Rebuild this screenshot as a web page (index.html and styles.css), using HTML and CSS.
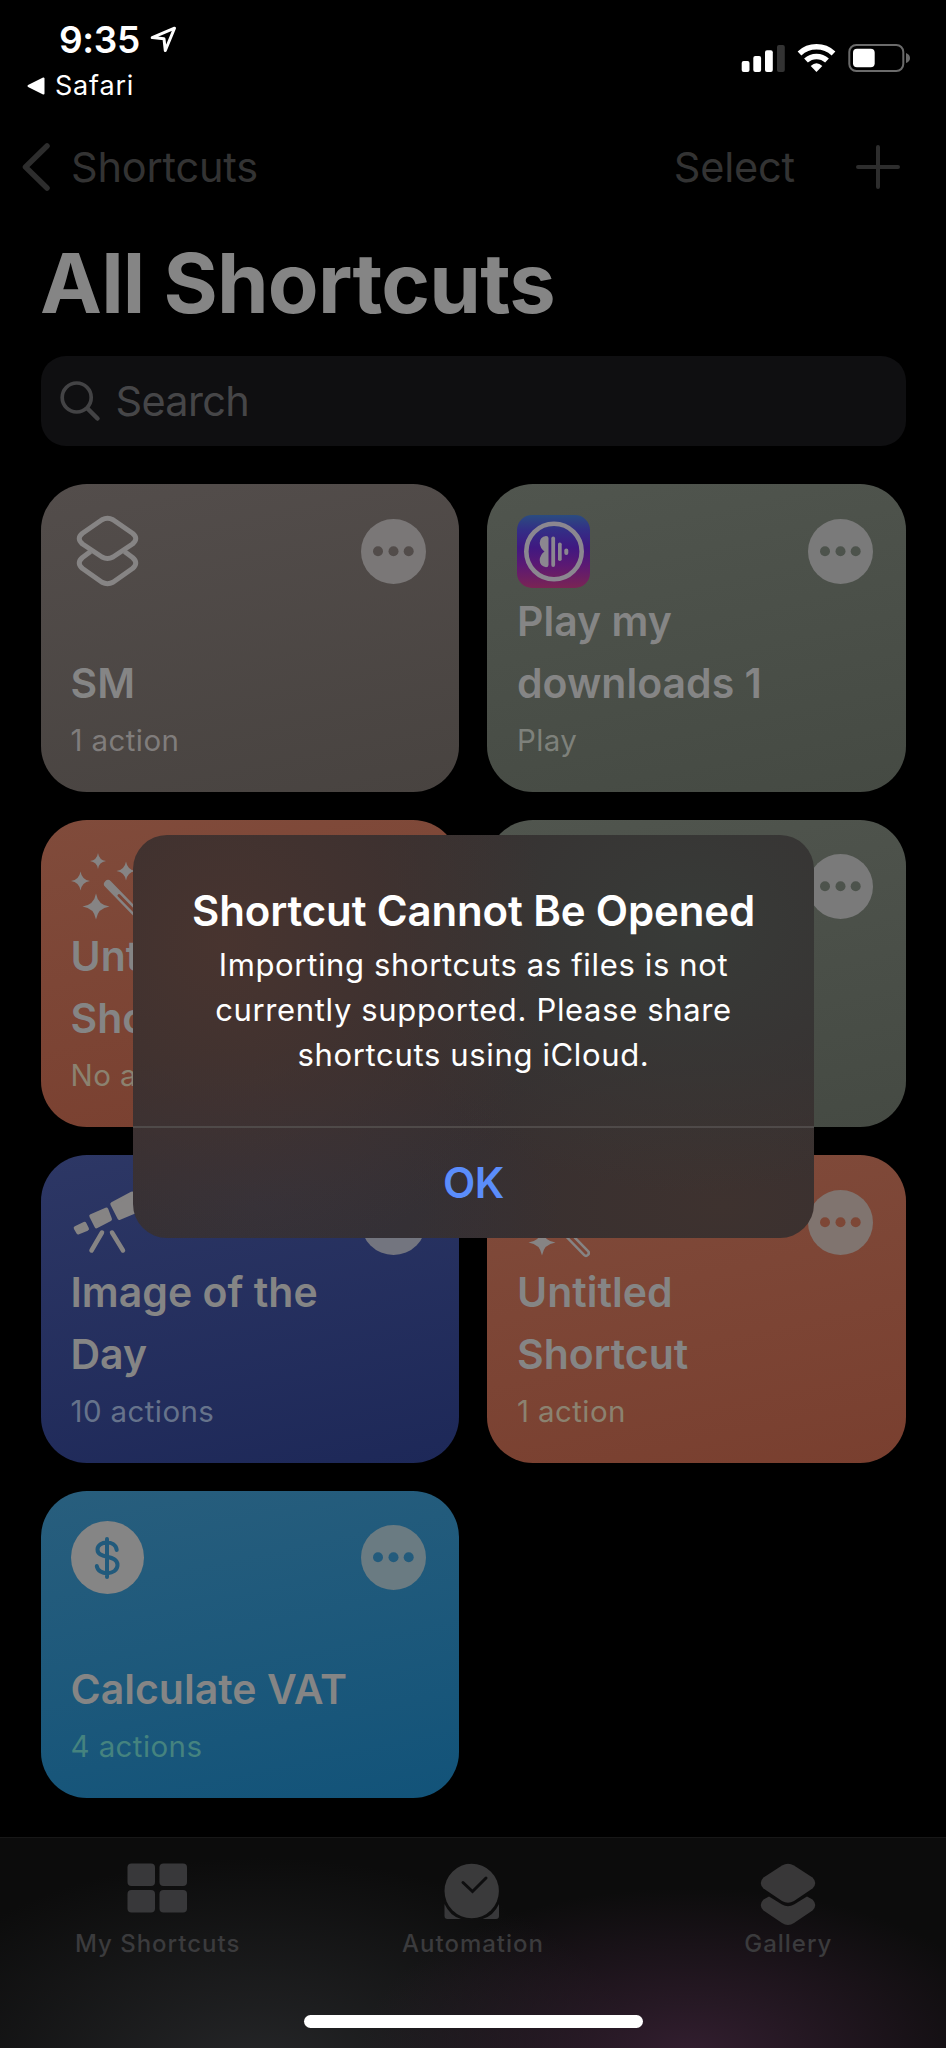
FILE: index.html
```html
<!DOCTYPE html>
<html lang="en">
<head>
    <meta charset="UTF-8">
    <title>All Shortcuts</title>
    <link rel="stylesheet" href="styles.css">
</head>
<body>
    <!-- shared shapes -->
    <svg class="defs" width="0" height="0">
        <symbol id="wand" viewBox="0 0 73 73">
            <path d="M27 3 Q28 10 35 11 Q28 12 27 19 Q26 12 19 11 Q26 10 27 3Z"/>
            <path d="M9.500 21.500 Q10.800 29.700 19 31 Q10.800 32.300 9.500 40.500 Q8.200 32.300 0 31 Q8.200 29.700 9.500 21.500Z"/>
            <path d="M55 11.500 Q56.300 19.700 64.500 21 Q56.300 22.300 55 30.500 Q53.700 22.300 45.500 21 Q53.700 19.700 55 11.500Z"/>
            <path d="M25 43.500 Q27 55 38.500 56.500 Q27 58 25 69.500 Q23 58 11.500 56.500 Q23 55 25 43.500Z"/>
            <path class="wand-body" d="M37 34 L69 67"/>
            <path class="wand-slot" d="M48 45.500 L69 67"/>
        </symbol>
        <symbol id="dots" viewBox="0 0 65 65">
            <circle cx="32.500" cy="32.500" r="32.500" fill="currentColor"/>
            <g>
                <circle cx="17" cy="32.300" r="5"/>
                <circle cx="32.500" cy="32.300" r="5"/>
                <circle cx="47.700" cy="32.300" r="5"/>
            </g>
        </symbol>
    </svg>

    <div class="phone">
        <header class="status">
            <div class="status-left">
                <div class="time">
                    <span>9:35</span>
                    <svg width="27" height="27" viewBox="0 0 27 27"><path d="M2.200 11.600 L24.500 2.200 L15.300 24.500 L14 12.800Z" fill="none" stroke="#fff" stroke-width="3" stroke-linejoin="round"/></svg>
                </div>
                <div class="back-app">
                    <svg width="18" height="18" viewBox="0 0 18 18"><path d="M1.500 9 L16.500 1.500 V16.500Z" fill="#fff" stroke="#fff" stroke-width="2" stroke-linejoin="round"/></svg>
                    <span>Safari</span>
                </div>
            </div>
            <svg class="indicators" width="170" height="30" viewBox="741 43 170 30">
                <g fill="#fff">
                    <rect x="741.700" y="61" width="7.800" height="11" rx="2"/>
                    <rect x="753.300" y="56" width="7.800" height="16" rx="2"/>
                    <rect x="765" y="50.300" width="7.800" height="21.700" rx="2"/>
                    <rect x="777" y="45" width="7.800" height="27" rx="2" fill="#333"/>
                </g>
                <g fill="none" stroke="#fff" stroke-width="5.500">
                    <path d="M799.500 53.500 A25 25 0 0 1 833.500 53.500"/>
                    <path d="M806 60.500 A15.500 15.500 0 0 1 827 60.500"/>
                </g>
                <path d="M816.500 72 L810.700 66 Q816.500 60.500 822.300 66Z" fill="#fff"/>
                <rect x="849.300" y="45" width="54" height="26" rx="7" fill="none" stroke="#6b6b6b" stroke-width="2"/>
                <path d="M906 53 Q910 54.500 910 58 Q910 61.500 906 63Z" fill="#6b6b6b"/>
                <rect x="853" y="48.700" width="21.700" height="18.600" rx="4" fill="#fff"/>
            </svg>
        </header>

        <nav class="nav">
            <a class="nav-back">
                <svg width="30" height="50" viewBox="0 0 30 50"><path d="M26 4 L4.500 25 L26 46" fill="none" stroke="#2d2d2d" stroke-width="5.500" stroke-linecap="round" stroke-linejoin="round"/></svg>
                <span class="nav-text">Shortcuts</span>
            </a>
            <div class="nav-actions">
                <span class="nav-text">Select</span>
                <svg width="44" height="44" viewBox="0 0 44 44"><path d="M22 2 V42 M2 22 H42" stroke="#2d2d2d" stroke-width="4" stroke-linecap="round"/></svg>
            </div>
        </nav>

        <h1 class="title">All Shortcuts</h1>

        <div class="search">
            <svg width="42" height="42" viewBox="0 0 42 42"><g fill="none" stroke="#434345" stroke-width="3.700" stroke-linecap="round"><circle cx="17.700" cy="17.500" r="14.500"/><path stroke-width="4.500" d="M28.500 28.500 L38.500 38.500"/></g></svg>
            <span>Search</span>
        </div>

        <main class="grid">
            <article class="card taupe">
                <div class="card-top">
                    <svg class="icon" viewBox="0 0 73 73">
                        <g fill="none" stroke="#868484" stroke-width="5" stroke-linejoin="round">
                            <path d="M31 4.700 Q36.500 1.800 42 4.700 L61.500 18.200 Q68 23.500 61.500 29 L42 42 Q36.500 45 31 42 L11.500 29 Q5 23.500 11.500 18.200Z"/>
                            <path d="M19.500 36.500 L11.500 42.500 Q5 48 11.500 53.500 L31 67.300 Q36.500 70.200 42 67.300 L61.500 53.500 Q68 48 61.500 42.500 L53.500 36.500"/>
                        </g>
                    </svg>
                    <svg class="more" viewBox="0 0 65 65"><use href="#dots"/></svg>
                </div>
                <h2>SM</h2>
                <p>1 action</p>
            </article>

            <article class="card sage">
                <div class="card-top">
                    <svg class="icon" viewBox="0 0 73 73">
                        <defs>
                            <linearGradient id="music" x1="0" y1="0" x2="0" y2="1">
                                <stop offset="0" stop-color="#2b4c80"/>
                                <stop offset=".2" stop-color="#332f86"/>
                                <stop offset=".45" stop-color="#401881"/>
                                <stop offset=".7" stop-color="#5d1972"/>
                                <stop offset="1" stop-color="#7a2454"/>
                            </linearGradient>
                        </defs>
                        <rect width="73" height="73" rx="15" fill="url(#music)"/>
                        <circle cx="37" cy="36.500" r="27.700" fill="none" stroke="#8b8790" stroke-width="4.600"/>
                        <g fill="#8b8790">
                            <path d="M31.500 23 Q31.500 21 29 21 Q22.700 22 22.700 28 Q23 33 27.500 36.500 Q23 40 22.700 45 Q22.700 51 29 52.300 Q31.500 52.300 31.500 50Z"/>
                            <rect x="34.300" y="21.500" width="3.800" height="30.500" rx="1.900"/>
                            <rect x="41" y="27.500" width="3.700" height="18.500" rx="1.800"/>
                            <rect x="47.300" y="33.500" width="4" height="6.400" rx="2"/>
                        </g>
                    </svg>
                    <svg class="more" viewBox="0 0 65 65"><use href="#dots"/></svg>
                </div>
                <h2>Play my<br>downloads 1</h2>
                <p>Play</p>
            </article>

            <article class="card coral">
                <div class="card-top">
                    <svg class="icon"><use href="#wand"/></svg>
                    <svg class="more" viewBox="0 0 65 65"><use href="#dots"/></svg>
                </div>
                <h2>Untitled<br>Shortcut</h2>
                <p>No actions</p>
            </article>

            <article class="card sage">
                <div class="card-top">
                    <span class="icon"></span>
                    <svg class="more" viewBox="0 0 65 65"><use href="#dots"/></svg>
                </div>
            </article>

            <article class="card indigo">
                <div class="card-top">
                    <svg class="icon" viewBox="0 0 73 73">
                        <g stroke="#868484" stroke-width="4" stroke-linejoin="round">
                            <path d="M4.700 42 L13.500 37.800 L16 42.800 L7.300 46.500Z"/>
                            <path d="M20.300 30 L35.300 23.500 L39 33.300 L25.500 40.300Z"/>
                            <path d="M41.300 18 L61 7.500 L70 23 L48.500 32Z"/>
                        </g>
                        <path d="M31 46.500 L20.500 64.500 M41 46.500 L52 64.500" fill="none" stroke="#868484" stroke-width="4.500" stroke-linecap="round"/>
                    </svg>
                    <svg class="more" viewBox="0 0 65 65"><use href="#dots"/></svg>
                </div>
                <h2>Image of the<br>Day</h2>
                <p>10 actions</p>
            </article>

            <article class="card coral">
                <div class="card-top">
                    <svg class="icon"><use href="#wand"/></svg>
                    <svg class="more" viewBox="0 0 65 65"><use href="#dots"/></svg>
                </div>
                <h2>Untitled<br>Shortcut</h2>
                <p>1 action</p>
            </article>

            <article class="card blue">
                <div class="card-top">
                    <div class="icon coin">
                        <svg width="26" height="44" viewBox="0 0 26 44" fill="none" stroke="#215a7c" stroke-width="4" stroke-linecap="round"><path d="M13 3 V41 M22.700 14 C21.500 3.500 3.500 4.500 3.500 13.500 C3.500 23.500 23.500 18 23.500 29 C23.500 39.500 4 40 2.800 30"/></svg>
                    </div>
                    <svg class="more" viewBox="0 0 65 65"><use href="#dots"/></svg>
                </div>
                <h2>Calculate VAT</h2>
                <p>4 actions</p>
            </article>
        </main>

        <footer class="tabs">
            <div class="tab">
                <svg width="62" height="64" viewBox="0 0 62 64" fill="#38383a">
                    <rect x="1.500" y="1.500" width="27.500" height="22.500" rx="4"/><rect x="33.500" y="1.500" width="27.500" height="22.500" rx="4"/>
                    <rect x="1.500" y="28" width="27.500" height="22.500" rx="4"/><rect x="33.500" y="28" width="27.500" height="22.500" rx="4"/>
                </svg>
                <span>My Shortcuts</span>
            </div>
            <div class="tab">
                <svg width="62" height="64" viewBox="0 0 62 64">
                    <path d="M3.500 42 Q9 54 20 57 H6.500 Q3.500 57 3.500 54Z M58 42 Q52.500 54 41.500 57 H55 Q58 57 58 54Z" fill="#38383a"/>
                    <circle cx="30.700" cy="29" r="27.200" fill="#3a3a3b"/>
                    <path d="M22 20.500 L31.500 29.500 L45 16" fill="none" stroke="#0e0e0f" stroke-width="3" stroke-linecap="round"/>
                </svg>
                <span>Automation</span>
            </div>
            <div class="tab">
                <svg width="62" height="64" viewBox="0 0 62 64" fill="#383738">
                    <path d="M12 34.500 L6.500 37.500 Q1 43 6.500 48.500 L25 61 Q31 65 37 61 L55.500 48.500 Q61 43 55.500 37.500 L50 34.500 L37 42.500 Q31 46 25 42.500Z"/>
                    <path d="M25 3.500 Q31 0 37 3.500 L55.500 15.500 Q61 21 55.500 26.500 L37 39 Q31 42.500 25 39 L6.500 26.500 Q1 21 6.500 15.500Z"/>
                </svg>
                <span>Gallery</span>
            </div>
        </footer>

        <div class="home-bar"></div>

        <div class="alert">
            <div class="alert-text">
                <h3>Shortcut Cannot Be Opened</h3>
                <p>Importing shortcuts as files is not<br>currently supported. Please share<br>shortcuts using iCloud.</p>
            </div>
            <div class="alert-button">OK</div>
        </div>
    </div>
</body>
</html>
```

FILE: styles.css
```css
* { box-sizing: border-box; }
body { margin: 0; background: #000; font-family: Inter, "Liberation Sans", sans-serif; color: #858585; }
h1, h2, h3, p { margin: 0; }
svg { display: block; flex: none; }
.defs { position: absolute; }

.phone {
    position: relative;
    width: 946px;
    height: 2048px;
    display: flex;
    flex-direction: column;
    overflow: hidden;
    background: #000;
}

/* status bar */
.status { height: 116px; display: flex; justify-content: space-between; padding: 18px 35px 0 27px; color: #fff; }
.time { display: flex; gap: 10px; padding-left: 32px; height: 51px; font-size: 37px; line-height: 44px; font-weight: 600; letter-spacing: -0.3px; }
.time svg { margin-top: 8px; }
.back-app { display: flex; align-items: center; gap: 10px; font-size: 27px; line-height: 34px; letter-spacing: 0.8px; }
.indicators { margin-top: 25px; }

/* navigation */
.nav { height: 101px; display: flex; justify-content: space-between; align-items: center; padding: 0 46px 0 21px; }
.nav-back, .nav-actions { display: flex; align-items: center; }
.nav-back { gap: 20px; }
.nav-actions { gap: 61px; }
.nav-text { font-size: 41.5px; line-height: 50px; color: #333; letter-spacing: -0.2px; }

.title { margin: 21px 0 0 40px; font-size: 83px; line-height: 90px; font-weight: 700; letter-spacing: -0.8px; color: #858585; }

.search {
    margin: 28px 40.5px 0 40.5px;
    height: 90px;
    border-radius: 25px;
    background: #0f0f11;
    display: flex;
    align-items: center;
    gap: 15px;
    padding-left: 18px;
    font-size: 41.5px;
    line-height: 50px;
    letter-spacing: -0.7px;
    color: #464648;
}

/* shortcut cards */
.grid { margin: 38px 40.5px 0 40.5px; display: grid; grid-template-columns: 1fr 1fr; grid-auto-rows: 307.5px; gap: 28px; }
.card { display: flex; flex-direction: column; border-radius: 46px; padding: 30px 33px 32px 30px; white-space: nowrap; }
.card-top { display: flex; justify-content: space-between; align-items: center; height: 74px; margin-bottom: auto; }
.icon { width: 73px; height: 73px; fill: #868484; }
.more { width: 65px; height: 65px; }
.card h2 { font-size: 41px; line-height: 62px; font-weight: 600; letter-spacing: 0; }
.card p { margin-top: 6px; font-size: 29.5px; line-height: 40px; letter-spacing: 0.4px; }
.taupe { background: linear-gradient(168deg, #534d4b, #484340); }
.sage { background: linear-gradient(168deg, #50554e, #454a43); }
.coral { background: linear-gradient(168deg, #804b3b, #793f2f); }
.indigo { background: linear-gradient(168deg, #2d3765, #1d2858); }
.blue { background: linear-gradient(168deg, #285e7d, #125379); }
.taupe .more { color: #7a7777; fill: #524c4a; }
.sage .more { color: #7a7a7a; fill: #4d534c; }
.coral .more { color: #80746f; fill: #7d4736; }
.indigo .more { color: #73757f; fill: #2a3460; }
.blue .more { color: #6a7b82; fill: #235b7c; }
.taupe p { color: #807d7c; }
.sage p { color: #7e817b; }
.coral p { color: #8b8270; }
.indigo p { color: #66738b; }
.blue p { color: #45837f; }
.coin { display: flex; align-items: center; justify-content: center; border-radius: 50%; background: #858585; }
.wand-body { fill: none; stroke: #868484; stroke-width: 8; stroke-linecap: round; }
.wand-slot { fill: none; stroke: #7d4636; stroke-width: 3; stroke-linecap: round; }

/* tab bar */
.tabs {
    margin-top: auto;
    height: 211px;
    border-top: 1px solid #171717;
    display: grid;
    grid-template-columns: repeat(3, 1fr);
    background:
        radial-gradient(ellipse 330px 165px at 690px 215px, #321e2f, rgba(46, 28, 40, 0)),
        radial-gradient(ellipse 380px 210px at 260px 230px, #252628, rgba(34, 35, 37, 0)),
        #0c0c0c;
}
.tab { display: flex; flex-direction: column; align-items: center; padding-top: 24px; gap: 3px; font-size: 24px; line-height: 30px; font-weight: 500; letter-spacing: 1px; color: #3b3b3d; }
.tab svg { margin-left: -1px; }
.home-bar { position: absolute; left: 304px; top: 2015px; width: 339px; height: 13px; border-radius: 7px; background: #fff; }

/* alert over the page */
.alert {
    position: absolute;
    left: 133px;
    top: 835px;
    width: 681px;
    height: 403px;
    border-radius: 34px;
    overflow: hidden;
    display: flex;
    flex-direction: column;
    text-align: center;
    color: #fff;
    background:
        radial-gradient(ellipse 330px 330px at 90px 110px, #48342f, rgba(72, 52, 47, 0)),
        radial-gradient(ellipse 330px 270px at 560px 90px, #383b38, rgba(56, 59, 56, 0)),
        radial-gradient(ellipse 300px 160px at 130px 370px, #33313a, rgba(51, 49, 58, 0)),
        radial-gradient(ellipse 320px 170px at 590px 370px, #3e322f, rgba(62, 50, 47, 0)),
        #362f30;
}
.alert-text { height: 291px; padding-top: 50px; }
.alert h3 { font-size: 42px; line-height: 52px; font-weight: 600; letter-spacing: -0.15px; }
.alert p { margin-top: 5px; font-size: 31px; line-height: 45px; letter-spacing: 0.65px; }
.alert-button { border-top: 2px solid #4f4a49; height: 112px; line-height: 110px; font-size: 42px; font-weight: 600; letter-spacing: -0.5px; color: #5b8dfb; }
```
